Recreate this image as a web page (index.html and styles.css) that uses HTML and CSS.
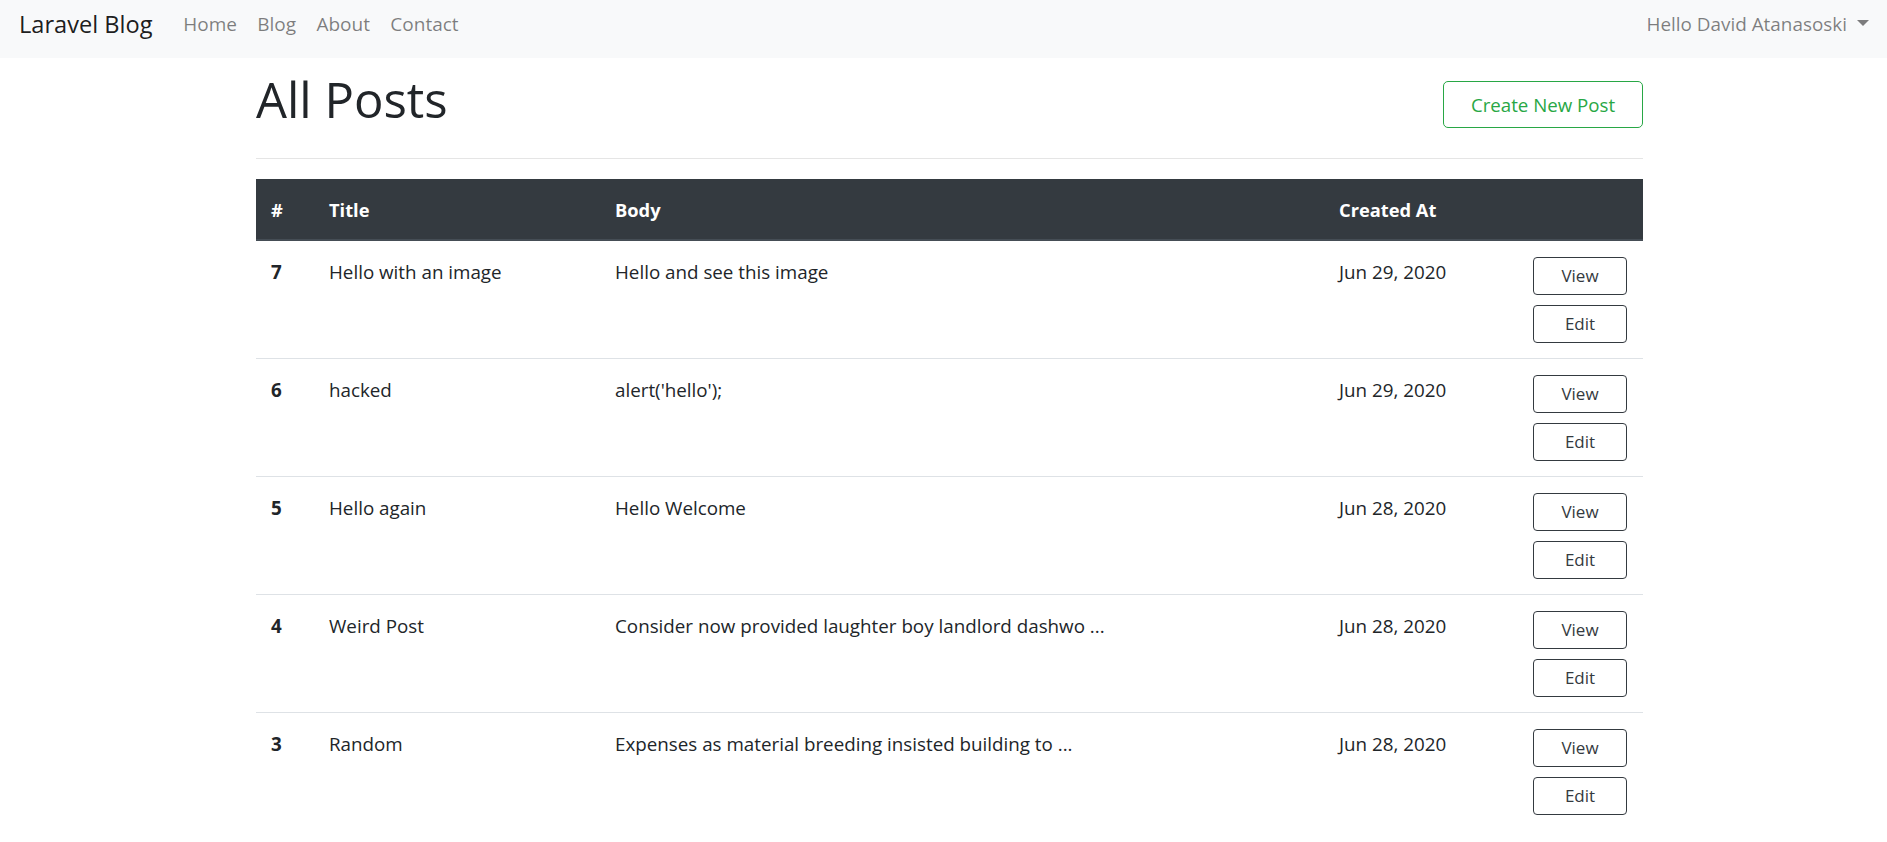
FILE: index.html
```
<!DOCTYPE html>
<html lang="en">
<head>
<meta charset="utf-8">
<title>Laravel Blog</title>
<link rel="stylesheet" href="styles.css">
</head>
<body>
<nav class="navbar">
  <a class="brand" href="#">Laravel Blog</a>
  <ul class="nav-links">
    <li><a href="#">Home</a></li>
    <li><a href="#">Blog</a></li>
    <li><a href="#">About</a></li>
    <li><a href="#">Contact</a></li>
  </ul>
  <a class="user-toggle" href="#">Hello David Atanasoski<span class="caret"></span></a>
</nav>

<main class="container">
  <div class="page-head">
    <h1 class="page-title">All Posts</h1>
    <a class="btn-create" href="#">Create New Post</a>
  </div>
  <hr class="divider">

  <table class="posts">
    <colgroup>
      <col class="c-id"><col class="c-title"><col class="c-body"><col class="c-date"><col class="c-actions">
    </colgroup>
    <thead>
      <tr><th>#</th><th>Title</th><th>Body</th><th>Created At</th><th></th></tr>
    </thead>
    <tbody>
      <tr>
        <td class="num">7</td><td>Hello with an image</td><td>Hello and see this image</td><td>Jun 29, 2020</td>
        <td><a class="btn-dark" href="#">View</a><a class="btn-dark" href="#">Edit</a></td>
      </tr>
      <tr>
        <td class="num">6</td><td>hacked</td><td>alert('hello');</td><td>Jun 29, 2020</td>
        <td><a class="btn-dark" href="#">View</a><a class="btn-dark" href="#">Edit</a></td>
      </tr>
      <tr>
        <td class="num">5</td><td>Hello again</td><td>Hello Welcome</td><td>Jun 28, 2020</td>
        <td><a class="btn-dark" href="#">View</a><a class="btn-dark" href="#">Edit</a></td>
      </tr>
      <tr>
        <td class="num">4</td><td>Weird Post</td><td>Consider now provided laughter boy landlord dashwo ...</td><td>Jun 28, 2020</td>
        <td><a class="btn-dark" href="#">View</a><a class="btn-dark" href="#">Edit</a></td>
      </tr>
      <tr>
        <td class="num">3</td><td>Random</td><td>Expenses as material breeding insisted building to ...</td><td>Jun 28, 2020</td>
        <td><a class="btn-dark" href="#">View</a><a class="btn-dark" href="#">Edit</a></td>
      </tr>
    </tbody>
  </table>
</main>
</body>
</html>
```
FILE: styles.css
```
* { box-sizing: border-box; }

html, body {
  margin: 0;
  padding: 0;
  overflow: hidden;
}

body {
  font-family: "Open Sans", "Noto Sans", sans-serif;
  font-size: 18.8px;
  line-height: 30px;
  color: #212529;
  background: #fff;
}

a { text-decoration: none; }

/* Navbar */
.navbar {
  display: flex;
  align-items: flex-start;
  height: 58px;
  padding: 0 18px 0 19px;
  background: #f8f9fa;
}

.brand {
  margin-top: 7px;
  margin-right: 20.5px;
  font-size: 23.6px;
  line-height: 34px;
  color: rgba(0, 0, 0, 0.9);
}

.nav-links {
  display: flex;
  list-style: none;
  margin: 10px 0 0 0;
  padding: 0;
}

.nav-links a {
  display: block;
  padding: 0 10.2px;
  font-size: 19px;
  line-height: 28px;
  color: rgba(0, 0, 0, 0.5);
}

.user-toggle {
  display: flex;
  align-items: center;
  margin-left: auto;
  margin-top: 10px;
  font-size: 18.9px;
  line-height: 28px;
  color: rgba(0, 0, 0, 0.5);
}

.caret {
  display: inline-block;
  width: 0;
  height: 0;
  margin-left: 10px;
  margin-top: -2px;
  border-top: 6px solid rgba(0, 0, 0, 0.5);
  border-left: 6px solid transparent;
  border-right: 6px solid transparent;
}

/* Content */
.container {
  width: 1387px;
  margin-left: 256px;
}

.page-head {
  display: flex;
  justify-content: space-between;
  align-items: flex-start;
  padding-top: 12px;
}

.page-title {
  margin: 0;
  font-size: 49px;
  font-weight: 400;
  line-height: 59px;
}

.btn-create {
  display: block;
  width: 200px;
  margin-top: 11px;
  padding: 7.5px 0;
  border: 1px solid #28a745;
  border-radius: 5px;
  font-size: 18.7px;
  line-height: 30px;
  text-align: center;
  color: #28a745;
}

.divider {
  margin: 29px 0 20px 0;
  border: 0;
  border-top: 1px solid rgba(0, 0, 0, 0.1);
  height: 0;
}

/* Table */
.posts {
  width: 100%;
  border-collapse: collapse;
  table-layout: fixed;
}

.c-id { width: 58px; }
.c-title { width: 286px; }
.c-body { width: 724px; }
.c-date { width: 194px; }
.c-actions { width: 125px; }

.posts th {
  padding: 16px 15px 14px 15px;
  background: #343a40;
  color: #fff;
  font-size: 18.3px;
  font-weight: 700;
  text-align: left;
  border-bottom: 2px solid #454d55;
}

.posts td {
  padding: 16px 15px 15px 15px;
  border-top: 1px solid #dee2e6;
  vertical-align: top;
}

.posts tbody tr:first-child td { border-top-color: #fff; }

.posts td.num { font-weight: 700; }

.btn-dark {
  display: block;
  width: 94px;
  padding: 6px 0;
  border: 1px solid #343a40;
  border-radius: 4px;
  font-size: 17px;
  line-height: 24px;
  text-align: center;
  color: #343a40;
}

.btn-dark + .btn-dark { margin-top: 10px; }
```
